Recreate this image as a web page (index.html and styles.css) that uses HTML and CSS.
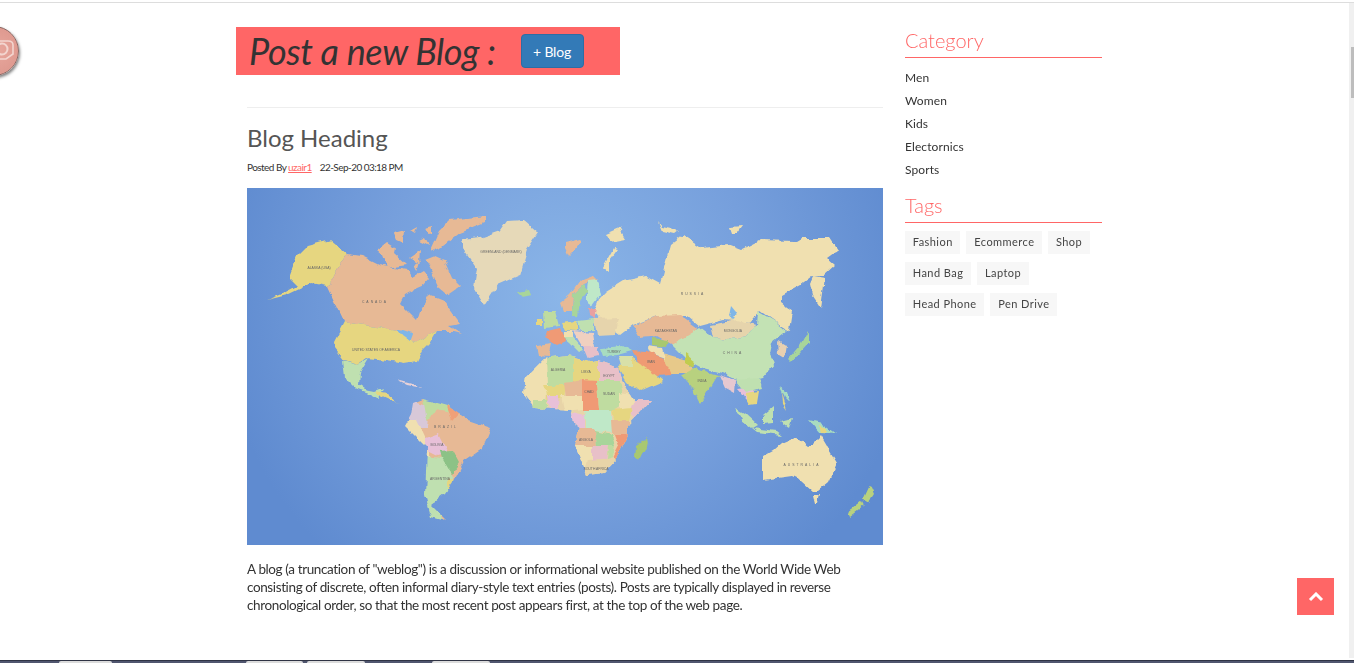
FILE: index.html
```html
<!DOCTYPE html>
<html lang="en">
<head>
    <meta charset="UTF-8">
    <meta name="viewport" content="width=device-width, initial-scale=1.0">
    <title>Blog</title>
    <link rel="stylesheet" href="styles.css">
</head>
<body>
    <div class="top-line"></div>

    <!-- floating round button, half off the screen -->
    <div class="float-circle">
        <svg width="50" height="50" viewBox="0 0 50 50">
            <path d="M20 14H38Q43 14 43 18V27L36 32H20" fill="none" stroke="#f3d5cf" stroke-width="1.6"/>
            <circle cx="32" cy="22" r="5.5" fill="none" stroke="#f3d5cf" stroke-width="2"/>
        </svg>
    </div>

    <div class="page">
        <div class="content">
            <div class="post-banner">
                <h2>Post a new Blog :</h2>
                <button class="btn-blog">+ Blog</button>
            </div>
            <hr class="divider">
            <h1 class="post-title">Blog Heading</h1>
            <p class="post-meta">Posted By <a href="#">uzair1</a> <span class="post-date">22-Sep-20 03:18 PM</span></p>

            <svg class="world-map" width="636" height="357" viewBox="0 0 636 357">
                <defs>
                    <radialGradient id="sea" gradientUnits="userSpaceOnUse" cx="320" cy="110" r="350">
                        <stop offset="0" stop-color="#8bb6e8"/>
                        <stop offset="0.55" stop-color="#769fdc"/>
                        <stop offset="1" stop-color="#5f8bd0"/>
                    </radialGradient>
                    <!-- roughen the straight polygon edges into coastlines -->
                    <filter id="coast" x="0" y="0" width="100%" height="100%">
                        <feTurbulence type="fractalNoise" baseFrequency="0.09" numOctaves="3" seed="4" result="noise"/>
                        <feDisplacementMap in="SourceGraphic" in2="noise" scale="6" xChannelSelector="R" yChannelSelector="G"/>
                        <feGaussianBlur stdDeviation="0.4"/>
                    </filter>
                    <clipPath id="africa-clip">
                        <polygon points="279,188 297,170 320,167 346,174 352,173 371,180 373,188 387,212 404,212 381,237 381,247 371,270 357,285 340,287 328,258 332,240 328,237 324,222 287,220 277,207"/>
                    </clipPath>
                    <clipPath id="sa-clip">
                        <polygon points="166,215 176,211 201,218 221,232 244,240 236,260 217,273 207,293 197,307 184,317 199,332 184,328 178,307 180,260 158,238 164,227"/>
                    </clipPath>
                </defs>
                <rect width="636" height="357" fill="url(#sea)"/>

                <g filter="url(#coast)">
                    <!-- north america -->
                    <polygon fill="#e6d680" points="100,66 80,98 65,95 40,107 20,112 33,107 50,98 42,90 50,68 60,58 83,52"/>
                    <polygon fill="#e7b995" points="100,66 115,68 135,78 160,82 165,90 177,83 183,90 177,97 170,100 157,107 153,115 170,132 173,123 182,107 197,113 213,135 202,137 215,145 207,143 190,143 167,155 157,143 97,134 80,98"/>
                    <g fill="#e7b995">
                        <polygon points="203,32 238,28 238,35 213,45 197,57 183,63 192,43"/>
                        <polygon points="130,63 140,55 148,60 147,65 160,77 140,80 135,67"/>
                        <polygon points="147,45 158,42 157,55 150,52"/>
                        <polygon points="163,42 170,38 168,45"/>
                        <polygon points="177,40 185,38 185,47"/>
                        <polygon points="172,53 178,50 182,58"/>
                        <polygon points="163,70 173,63 172,75"/>
                        <polygon points="167,77 173,73 170,83"/>
                        <polygon points="178,72 188,68 197,72 205,90 213,98 200,107 192,100 183,80"/>
                    </g>
                    <polygon fill="#e6d9b8" points="215,52 233,50 253,43 260,33 277,32 292,45 280,63 273,87 250,97 237,117 227,100 230,80 218,63"/>
                    <polygon fill="#e6d680" points="97,134 157,143 167,155 190,143 183,155 175,163 170,173 157,175 140,172 120,170 110,177 98,173 88,160 87,153"/>
                    <polygon fill="#bfe0b0" points="96,173 110,177 122,170 113,185 112,197 118,201 128,203 136,200 131,210 122,205 108,200 98,190"/>
                    <polygon fill="#e8d2d8" points="150,192 165,196 175,200 160,197"/>
                    <polygon fill="#e6d680" points="128,203 140,205 150,214 155,215 142,212 133,208"/>
                    <polygon fill="#7fb6e8" points="150,140 165,145 162,153 155,148"/>

                    <!-- south america -->
                    <g clip-path="url(#sa-clip)">
                        <rect x="150" y="205" width="100" height="135" fill="#e7b995"/>
                        <polygon fill="#d8c8d8" points="160,240 164,212 182,218 180,240"/>
                        <polygon fill="#bfdca0" points="175,205 205,205 205,225 190,222 180,232"/>
                        <polygon fill="#f0a078" points="200,218 212,224 205,232"/>
                        <polygon fill="#f0e0b0" points="150,232 170,232 182,258 182,270 165,262"/>
                        <polygon fill="#e8c0d8" points="178,250 192,245 202,265 190,268 178,262"/>
                        <polygon fill="#8cc286" points="192,263 205,262 212,275 205,285 195,275"/>
                        <polygon fill="#bfe0b0" points="175,268 195,270 207,290 205,300 190,320 200,340 170,340"/>
                        <polygon fill="#e6d680" points="203,290 215,295 208,308 200,305"/>
                    </g>

                    <!-- greenland side islands and iceland -->
                    <polygon fill="#a8d59a" points="270,104 283,102 285,107 275,109"/>
                    <polygon fill="#e7b995" points="318,55 333,51 335,53 328,62 322,68 318,60"/>
                    <polygon fill="#f0e0b0" points="356,80 367,60 371,61 362,73 362,85"/>
                    <polygon fill="#f0e0b0" points="411,33 415,38 425,40 432,43 428,46 415,43"/>
                    <polygon fill="#f0e0b0" points="483,39 495,38 490,45 485,45"/>
                    <polygon fill="#f0e0b0" points="358,46 372,40 378,50 362,53"/>

                    <!-- russia -->
                    <polygon fill="#f0e0b0" points="353,110 360,103 376,93 400,88 413,95 423,57 436,47 456,60 480,57 493,62 513,52 550,53 555,50 583,50 591,62 580,70 588,77 576,88 565,88 553,97 535,107 535,115 546,123 543,143 530,135 513,123 503,135 476,132 453,138 441,128 410,128 386,137 373,147 353,133 348,123"/>
                    <polygon fill="#f0e0b0" points="566,88 578,90 576,105 574,120 566,108 563,95"/>
                    <polygon fill="#7fb6e8" points="484,118 489,124 485,133 482,128"/>

                    <!-- asia -->
                    <polygon fill="#e7b995" points="386,138 410,128 433,127 451,140 446,150 426,157 410,148 393,150"/>
                    <polygon fill="#e6d4ac" points="463,137 490,132 510,137 500,148 480,152 466,150"/>
                    <polygon fill="#c3e2b4" points="425,157 453,140 466,150 480,152 500,148 510,137 511,124 530,135 540,143 525,155 523,165 528,175 515,190 495,195 475,185 455,180 440,172"/>
                    <polygon fill="#a8c870" points="405,150 422,152 420,160 405,158"/>
                    <polygon fill="#e7c98a" points="415,165 440,172 445,185 420,185"/>
                    <polygon fill="#c0cc50" points="438,165 448,172 445,180 438,175"/>
                    <polygon fill="#f0e0b0" points="400,158 415,160 418,170 403,165"/>
                    <polygon fill="#ef9a73" points="385,162 400,163 416,170 424,187 410,188 395,180"/>
                    <polygon fill="#a8dcc0" points="353,160 376,158 385,163 370,167 356,168"/>
                    <polygon fill="#e6d680" points="371,180 385,170 400,180 416,193 393,203 379,193"/>
                    <polygon fill="#d8e0a8" points="372,168 385,168 385,178 375,178"/>
                    <polygon fill="#b8d17f" points="434,187 447,180 471,187 459,207 453,216 445,200"/>
                    <polygon fill="#e6c8d0" points="472,187 488,192 487,205 478,200"/>
                    <polygon fill="#e8c0d8" points="490,200 505,198 510,212 500,212"/>
                    <polygon fill="#e6d680" points="497,205 512,203 510,215 503,216"/>
                    <polygon fill="#bfe0b0" points="488,192 512,190 515,200 498,204"/>
                    <polygon fill="#e8d0b0" points="531,153 539,158 537,170 532,167"/>
                    <polygon fill="#a8d59a" points="553,157 561,142 561,155 545,173 542,170"/>
                    <polygon fill="#e6d680" points="535,205 540,222 536,216"/>
                    <polygon fill="#a8dcc0" points="532,198 540,205 543,215 538,210"/>
                    <polygon fill="#bfe0b0" points="488,220 497,225 510,237 505,240 495,232"/>
                    <polygon fill="#bfe0b0" points="515,228 527,218 527,235 515,236"/>
                    <polygon fill="#bfe0b0" points="505,240 530,243 535,247 510,244"/>
                    <polygon fill="#bfe0b0" points="533,233 545,230 542,240"/>
                    <polygon fill="#a8dcc0" points="562,232 575,235 590,246 573,245"/>
                    <polygon fill="#e6d680" points="572,236 580,240 580,245 574,245"/>

                    <!-- europe -->
                    <polygon fill="#e7b995" points="313,115 323,107 333,93 346,88 350,92 336,97 326,107 325,123 316,123"/>
                    <polygon fill="#a8d59a" points="326,107 336,97 341,103 333,113 331,128 325,128"/>
                    <polygon fill="#bfe8c8" points="341,93 350,92 353,107 346,117 340,113 340,103"/>
                    <polygon fill="#bfdca0" points="297,123 308,123 312,138 298,140"/>
                    <polygon fill="#e6d680" points="290,131 296,131 296,138 290,138"/>
                    <polygon fill="#f09a75" points="300,143 313,140 318,153 310,157 298,150"/>
                    <polygon fill="#e7b995" points="290,157 305,155 302,168 292,167"/>
                    <polygon fill="#e6d680" points="315,135 330,133 330,143 318,142"/>
                    <polygon fill="#bfe0b0" points="330,133 347,131 347,143 332,143"/>
                    <polygon fill="#e8a0a0" points="341,120 350,120 348,131 342,128"/>
                    <polygon fill="#e6d4ac" points="347,131 372,130 368,147 350,148"/>
                    <polygon fill="#bfe0b0" points="316,150 325,148 337,163 332,165 322,155"/>
                    <polygon fill="#f0d0c0" points="326,143 345,145 347,158 335,158"/>
                    <polygon fill="#f0e0b0" points="316,143 326,143 326,150 316,150"/>
                    <polygon fill="#e8c0c8" points="337,158 350,158 352,168 342,170"/>

                    <!-- africa, countries clipped to the outline -->
                    <g clip-path="url(#africa-clip)">
                        <rect x="270" y="160" width="140" height="135" fill="#e8d4a8"/>
                        <polygon fill="#f0e0b0" points="270,180 300,165 301,197 295,225 270,225"/>
                        <polygon fill="#bfdca0" points="300,165 326,160 326,197 301,197"/>
                        <polygon fill="#e6d680" points="326,160 352,160 352,195 336,192 326,197"/>
                        <polygon fill="#e8c0c8" points="352,160 378,160 373,193 352,193"/>
                        <polygon fill="#e6d680" points="297,197 320,197 318,210 300,214"/>
                        <polygon fill="#e7b995" points="318,195 337,192 336,208 320,210"/>
                        <polygon fill="#f09a75" points="336,192 350,193 352,222 336,222"/>
                        <polygon fill="#bfdca0" points="350,193 373,193 378,215 368,222 352,222"/>
                        <polygon fill="#f0e0b0" points="372,205 389,207 387,222 372,224"/>
                        <polygon fill="#e8c0c8" points="389,207 410,207 392,235 382,224"/>
                        <polygon fill="#f0e0b0" points="314,208 336,208 336,222 318,224"/>
                        <polygon fill="#bfdca0" points="285,212 300,212 300,225 285,225"/>
                        <polygon fill="#e8c0d8" points="300,208 312,208 310,222 302,222"/>
                        <polygon fill="#e8c0d8" points="325,225 338,228 338,240 325,240"/>
                        <polygon fill="#bfe8c8" points="337,222 365,222 365,245 347,243 340,240"/>
                        <polygon fill="#e6d680" points="365,222 385,220 382,232 368,236"/>
                        <polygon fill="#e7b995" points="364,232 382,232 382,247 365,247"/>
                        <polygon fill="#e7b995" points="325,240 348,240 350,258 325,258"/>
                        <polygon fill="#a8d59a" points="348,243 365,247 368,258 350,258"/>
                        <polygon fill="#f09a75" points="368,247 385,247 372,272 366,270 372,258"/>
                        <polygon fill="#f0e0b0" points="325,258 345,258 345,285 325,285"/>
                        <polygon fill="#e8c0c8" points="345,258 360,258 358,272 345,272"/>
                        <polygon fill="#bfdca0" points="360,258 368,258 366,268 359,270"/>
                        <polygon fill="#e8d4a8" points="340,272 368,270 362,292 335,292"/>
                    </g>
                    <polygon fill="#a8c870" points="400,250 401,256 393,273 387,270 388,258"/>

                    <!-- australia and nz -->
                    <polygon fill="#f0e0b0" points="516,268 527,262 535,255 549,249 561,258 566,256 574,248 590,275 582,293 570,303 566,303 555,293 545,288 516,292"/>
                    <polygon fill="#f0e0b0" points="566,308 573,308 571,316 568,316"/>
                    <polygon fill="#b8d17f" points="623,297 627,306 621,315 616,312"/>
                    <polygon fill="#b8d17f" points="614,314 616,318 603,328 601,324"/>
                </g>

                <!-- country names -->
                <g class="map-labels">
                    <text x="72" y="81">ALASKA (USA)</text>
                    <text x="128" y="115" class="wide">CANADA</text>
                    <text x="254" y="65">GREENLAND (DENMARK)</text>
                    <text x="129" y="163">UNITED STATES OF AMERICA</text>
                    <text x="446" y="107" class="wide">RUSSIA</text>
                    <text x="419" y="144">KAZAKHSTAN</text>
                    <text x="486" y="144">MONGOLIA</text>
                    <text x="486" y="166" class="wide">CHINA</text>
                    <text x="367" y="165">TURKEY</text>
                    <text x="404" y="175">IRAN</text>
                    <text x="455" y="194">INDIA</text>
                    <text x="199" y="240" class="wide">BRAZIL</text>
                    <text x="190" y="258">BOLIVIA</text>
                    <text x="193" y="292">ARGENTINA</text>
                    <text x="311" y="183">ALGERIA</text>
                    <text x="339" y="185">LIBYA</text>
                    <text x="362" y="189">EGYPT</text>
                    <text x="342" y="205">CHAD</text>
                    <text x="362" y="207">SUDAN</text>
                    <text x="339" y="253">ANGOLA</text>
                    <text x="349" y="282">SOUTH AFRICA</text>
                    <text x="555" y="278" class="wide">AUSTRALIA</text>
                </g>
            </svg>

            <p class="post-text">A blog (a truncation of "weblog") is a discussion or informational website published on the World Wide Web consisting of discrete, often informal diary-style text entries (posts). Posts are typically displayed in reverse chronological order, so that the most recent post appears first, at the top of the web page.</p>
        </div>

        <div class="sidebar">
            <h3 class="side-title">Category</h3>
            <ul class="cat-list">
                <li>Men</li>
                <li>Women</li>
                <li>Kids</li>
                <li>Electornics</li>
                <li>Sports</li>
            </ul>
            <h3 class="side-title">Tags</h3>
            <div class="tag-list">
                <span class="tag">Fashion</span>
                <span class="tag">Ecommerce</span>
                <span class="tag">Shop</span>
                <span class="tag">Hand Bag</span>
                <span class="tag">Laptop</span>
                <span class="tag">Head Phone</span>
                <span class="tag">Pen Drive</span>
            </div>
        </div>
    </div>

    <a class="to-top" href="#">
        <svg width="16" height="10" viewBox="0 0 16 10"><path d="M2 8l6-6 6 6" fill="none" stroke="#fff" stroke-width="3"/></svg>
    </a>

    <div class="scroll-track"><div class="scroll-thumb"></div></div>

    <!-- strip of the window below the page -->
    <div class="task-strip">
        <span class="strip-tab tab-one"></span>
        <span class="strip-tab tab-two"></span>
        <span class="strip-tab tab-three"></span>
        <span class="strip-tab tab-four"></span>
    </div>
</body>
</html>
```

FILE: styles.css
```css
html, body {
    height: 100%;
}
body {
    margin: 0;
    padding: 0;
    display: flex;
    flex-direction: column;
    overflow: hidden;
    background-color: #fff;
    color: #333;
    font-family: Lato, "Liberation Sans", sans-serif;
}
.top-line {
    height: 1px;
    margin-top: 2px;
    background-color: #ddd;
}
.page {
    flex: 1;
    display: flex;
    padding-left: 247px;
    min-height: 0;
}
.content {
    width: 636px;
}
.post-banner {
    display: flex;
    align-items: center;
    width: 384px;
    height: 48px;
    margin: 24px 0 0 -11px;
    background-color: #ff6666;
}
.post-banner h2 {
    margin: 0 0 0 13px;
    font-size: 36px;
    font-weight: 400;
    font-style: italic;
    letter-spacing: -0.4px;
    color: #333;
}
.btn-blog {
    width: 63px;
    height: 34px;
    margin-left: 25px;
    padding: 0;
    font-family: Lato, sans-serif;
    font-size: 14px;
    letter-spacing: -0.2px;
    color: #fff;
    background-color: #337ab7;
    border: 1px solid #2e6da4;
    border-radius: 4px;
}
.divider {
    height: 1px;
    margin: 32px 0 0;
    border: none;
    background-color: #eee;
}
.post-title {
    margin: 15px 0 0;
    font-size: 24px;
    line-height: 30px;
    font-weight: 400;
    color: #555;
}
.post-meta {
    margin: 7px 0 0;
    font-size: 10px;
    line-height: 14px;
    letter-spacing: -0.55px;
    color: #333;
}
.post-meta a {
    color: #ff6666;
}
.post-date {
    margin-left: 6px;
}
.world-map {
    display: block;
    margin-top: 14px;
}
.map-labels text {
    font-family: "Liberation Sans", sans-serif;
    font-size: 3.4px;
    fill: #666;
    text-anchor: middle;
}
.map-labels .wide {
    letter-spacing: 2px;
}
.post-text {
    margin: 15px 0 0;
    font-size: 13.5px;
    line-height: 18px;
    letter-spacing: -0.38px;
    color: #333;
}
.sidebar {
    width: 197px;
    margin-left: 22px;
    padding-top: 25px;
}
.side-title {
    margin: 0;
    padding-bottom: 5px;
    font-size: 20px;
    line-height: 24px;
    font-weight: 300;
    color: #ff6666;
    border-bottom: 1px solid #ff6666;
}
.cat-list {
    list-style: none;
    margin: 8px 0 12px;
    padding: 0;
}
.cat-list li {
    font-size: 12px;
    line-height: 23px;
    letter-spacing: 0.1px;
    color: #333;
}
.tag-list {
    display: flex;
    flex-wrap: wrap;
    gap: 8px 6px;
    margin-top: 8px;
}
.tag {
    height: 23px;
    padding: 0 7.75px;
    font-size: 11px;
    line-height: 22px;
    letter-spacing: 0.45px;
    color: #444;
    background-color: #f7f7f7;
}
.float-circle {
    position: absolute;
    left: -31px;
    top: 26px;
    width: 50px;
    height: 50px;
    border-radius: 50%;
    overflow: hidden;
    background: radial-gradient(circle at 55% 50%, #e8a79d 0%, #df9a90 65%, #c47f78 100%);
    border: 1px solid #8a6a66;
    box-sizing: border-box;
    box-shadow: 1px 2px 3px rgba(0, 0, 0, 0.5);
}
.to-top {
    position: absolute;
    left: 1297px;
    top: 578px;
    width: 37px;
    height: 37px;
    display: flex;
    align-items: center;
    justify-content: center;
    background-color: #ff6666;
}
.scroll-track {
    position: absolute;
    right: 0;
    top: 3px;
    bottom: 5px;
    width: 5px;
    background-color: #f0f0f0;
}
.scroll-thumb {
    width: 3px;
    height: 51px;
    margin: 44px 0 0 2px;
    background-color: #bdbdbd;
}
.task-strip {
    height: 2px;
    display: flex;
    align-items: flex-end;
    background-color: #50566f;
    border-top: 1px solid #2f3344;
}
.strip-tab {
    height: 2px;
    background-color: #dcdcdc;
    border-radius: 2px 2px 0 0;
}
.tab-one {
    width: 53px;
    margin-left: 59px;
}
.tab-two {
    width: 57px;
    margin-left: 134px;
}
.tab-three {
    width: 58px;
    margin-left: 4px;
}
.tab-four {
    width: 58px;
    margin-left: 67px;
}
```
